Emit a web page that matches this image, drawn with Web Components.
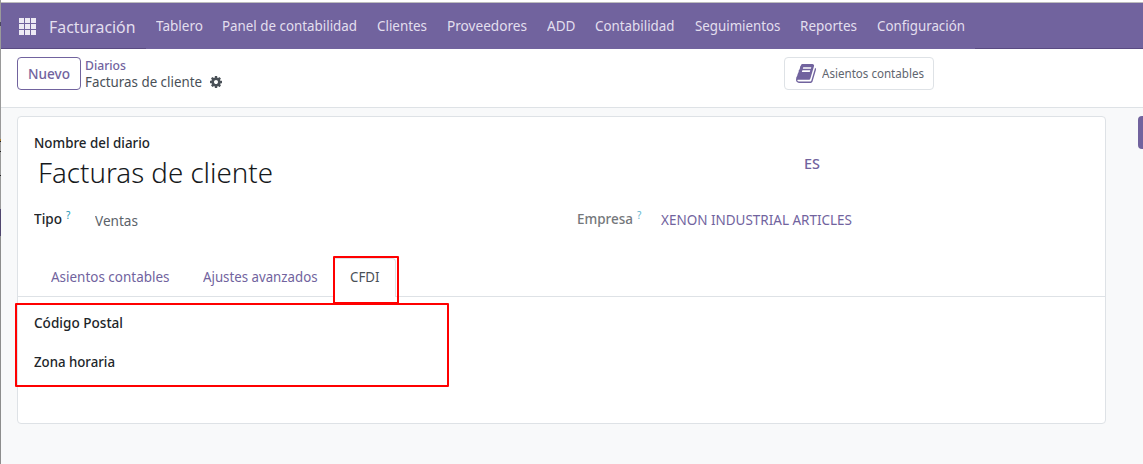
<!DOCTYPE html>
<html lang="es">
<head>
<meta charset="utf-8">
<title>Facturas de cliente</title>
<style>
body{margin:0;background:#f8f9fa;overflow:hidden;font:400 14px/20px "Noto Sans","Open Sans",sans-serif}
</style>
</head>
<body>
<journal-app></journal-app>
<script>
const define = (name, html, setup) => {
  const t = document.createElement('template');
  t.innerHTML = html;
  customElements.define(name, class extends HTMLElement {
    connectedCallback() {
      if (this.shadowRoot) return;
      this.attachShadow({mode: 'open'}).append(t.content.cloneNode(true));
      if (setup) setup(this, this.shadowRoot);
    }
  });
};

// A single line of text, condensed or widened to the width in its "w" attribute.
define('fit-text', `<style>
:host{display:block;flex:none;white-space:nowrap;height:20px;line-height:20px}
span{display:inline-block;transform-origin:0 0}
</style><span><slot></slot></span>`, (el, root) => {
  const s = root.querySelector('span'), w = +el.getAttribute('w');
  el.style.width = w + 'px';
  s.style.transform = `scaleX(${w / s.getBoundingClientRect().width})`;
});

define('apps-icon', `<style>:host{display:block;width:17px;height:17px}svg{display:block}</style>
<svg width="17" height="17" fill="#edeaf4"><path d="M0 0h5v5H0zM6 0h5v5H6zM12 0h5v5h-5zM0 6h5v5H0zM6 6h5v5H6zM12 6h5v5h-5zM0 12h5v5H0zM6 12h5v5H6zM12 12h5v5h-5z"/></svg>`);

define('gear-icon', `<style>:host{display:block;width:12px;height:12px}svg{display:block}</style>
<svg width="12" height="12" viewBox="0 0 1536 1536" fill="#495057"><path d="M1024 768q0-106-75-181t-181-75-181 75-75 181 75 181 181 75 181-75 75-181zm512-109v222q0 12-8 23t-20 13l-185 28q-19 54-39 91 35 50 107 138 10 12 10 25t-9 23q-27 37-99 108t-94 71q-12 0-26-9l-138-108q-44 23-91 38-16 136-29 186-7 28-36 28H657q-14 0-24.500-8.500T621 1506l-28-184q-49-16-90-37l-141 107q-10 9-25 9-14 0-25-11-126-114-165-168-7-10-7-23 0-12 8-23 15-21 51-66.500t54-70.500q-27-50-41-99L29 913q-13-2-21-12.500T0 877V655q0-12 8-23t19-13l186-28q14-46 39-92-40-57-107-138-10-12-10-24 0-10 9-23 26-36 98.500-107.500T337 135q13 0 26 10l138 107q44-23 91-38 16-136 29-186 7-28 36-28h222q14 0 24.500 8.500T915 30l28 184q49 16 90 37l142-107q9-9 24-9 13 0 25 10 129 119 165 170 7 8 7 22 0 12-8 23-15 21-51 66.500t-54 70.500q26 50 41 98l183 28q13 2 21 12.500t8 23.500z"/></svg>`);

define('book-icon', `<style>:host{display:block;width:20px;height:19px}svg{display:block}</style>
<svg width="20" height="19" viewBox="0 0 1664 1536" preserveAspectRatio="none" fill="#71639e"><path d="M1639 350q40 57 18 129l-275 906q-19 64-76.500 107.500T1183 1536H260q-77 0-148.500-53.500T12 1351q-24-67-2-127 0-4 3-27t4-37q1-8-3-21.500t-3-19.500q2-11 8-21t16.500-23.500T52 1051q23-38 45-91.500t30-91.500q3-10 .5-30t-.5-28q3-11 17-28t17-23q21-36 42-92t25-90q1-9-2.500-32t.5-28q4-13 22-30.500t22-22.500q19-26 42.500-84.500T340 283q1-8-3-25.500t-2-26.500q2-8 9-18t18-23 17-21q8-12 16.500-30.500t15-35 16-36 19.500-32T469.500 12t36-11.500T553 6l-1 3q38-9 51-9h761q74 0 114 56t18 130l-274 906q-36 119-71.500 153.500T1022 1280H153q-27 0-38 15-11 16-1 43 24 70 144 70h923q29 0 56-15.500t35-41.500l300-987q7-22 5-57 38 15 59 43zm-1064 2q-4 13 2 22.500t20 9.500h608q13 0 25.500-9.500T1247 352l21-64q4-13-2-22.500t-20-9.500H638q-13 0-25.500 9.500T596 288zm-83 256q-4 13 2 22.500t20 9.500h608q13 0 25.500-9.500T1164 608l21-64q4-13-2-22.500t-20-9.500H555q-13 0-25.500 9.500T513 544z"/></svg>`);

define('nav-bar', `<style>
:host{display:flex;box-sizing:border-box;height:47px;padding:0 0 0 19px;border-top:1px solid #bdbdbd;background:linear-gradient(90deg,#5a4b83 146px,transparent 146px 975px,#5a4b83 975px) bottom/100% 1px no-repeat #71639e;color:#e3dfee}
apps-icon{margin-top:15px}
.brand{font-size:17px;margin:14px 20.500px 0 12.500px}
nav{display:flex;gap:19.900px;margin-top:13px}
</style><apps-icon></apps-icon><fit-text class="brand" w="86.500">Facturación</fit-text>
<nav><fit-text w="47">Tablero</fit-text><fit-text w="135">Panel de contabilidad</fit-text><fit-text w="50">Clientes</fit-text><fit-text w="80">Proveedores</fit-text><fit-text w="28.500">ADD</fit-text><fit-text w="79.500">Contabilidad</fit-text><fit-text w="85.500">Seguimientos</fit-text><fit-text w="57">Reportes</fit-text><fit-text w="88">Configuración</fit-text></nav>`);

define('control-panel', `<style>
:host{display:flex;box-sizing:border-box;height:59px;padding:8px 0 0 17px;background:#fff;border-bottom:1px solid #dee2e6}
button{font:inherit;display:flex;align-items:center;box-sizing:border-box;height:33px;background:#fff;border-radius:4px;margin:0}
.new{width:64px;padding:0 0 0 10px;border:1px solid #71639e;color:#71639e;font-weight:500}
.crumbs{width:699px;margin:-2px 0 0 4px}
.up{color:#71639e;font-weight:500;font-size:13px;height:17px}
.here{display:flex;gap:8px;color:#495057}
gear-icon{margin-top:4px}
.stat{width:150px;padding:0 0 0 11px;gap:6px;border:1px solid #dee2e6;color:#5f6670;font-size:12px}
</style><button class="new"><fit-text w="42">Nuevo</fit-text></button>
<div class="crumbs"><fit-text class="up" w="41">Diarios</fit-text><div class="here"><fit-text w="117">Facturas de cliente</fit-text><gear-icon></gear-icon></div></div>
<button class="stat"><book-icon></book-icon><fit-text w="102">Asientos contables</fit-text></button>`);

define('form-label', `<style>
:host{display:flex;gap:4px;color:#212529;font-weight:500}
:host([muted]){color:#74777b}
i{font:10px/12px "Noto Sans",sans-serif;color:#1592b4}
:host([muted]) i{color:#5fb4d0}
</style>`, (el, root) => {
  const f = document.createElement('fit-text');
  f.setAttribute('w', el.getAttribute('w'));
  f.textContent = el.getAttribute('text');
  root.append(f);
  if (el.hasAttribute('help')) {
    const i = document.createElement('i');
    i.textContent = '?';
    root.append(i);
  }
});

define('note-book', `<style>
:host{display:block;margin-top:26px}
.tabs{display:flex;height:39px;padding-left:16px;border-bottom:1px solid #dee2e6;color:#71639e}
.tab{padding:10px 16px 0 17px}
.active{box-sizing:border-box;height:39px;width:63px;margin-top:1px;padding:8px 0 0 16px;border:1px solid #dee2e6;border-bottom:0;border-radius:4px 4px 0 0;background:#fff;color:#495057}
.page{display:grid;gap:19px;padding:16px 0 0 16px}
</style><div class="tabs"><div class="tab"><fit-text w="118.500">Asientos contables</fit-text></div><div class="tab"><fit-text w="114.500">Ajustes avanzados</fit-text></div><div class="tab active"><fit-text w="29.500">CFDI</fit-text></div></div>
<div class="page"><form-label w="89" text="Código Postal"></form-label><form-label w="81" text="Zona horaria"></form-label></div>`);

define('form-sheet', `<style>
:host{display:block;box-sizing:border-box;width:1089px;height:308px;padding-top:16px;background:#fff;border:1px solid #dee2e6;border-radius:4px}
.title{display:flex;padding-left:20px}
h1{margin:4px 531px 0 0;font-weight:300;font-size:27px;color:#16191c}
h1 fit-text{height:32px;line-height:32px}
.lang{margin-top:1px;color:#71639e;font-weight:500}
.row{display:grid;grid-template-columns:61px 482px 84px 1fr;margin-top:20px}
.row>*{margin-left:16px}
.first{margin-left:16px}
.row .type{margin-top:2px;color:#5b6269}
.row .co{margin-top:1px;color:#71639e}
</style><form-label class="first" w="116" text="Nombre del diario"></form-label>
<div class="title"><h1><fit-text w="235">Facturas de cliente</fit-text></h1><fit-text class="lang" w="16">ES</fit-text></div>
<div class="row"><form-label w="28" text="Tipo" help></form-label><fit-text class="type" w="43">Ventas</fit-text><form-label muted w="56" text="Empresa" help></form-label><fit-text class="co" w="191">XENON INDUSTRIAL ARTICLES</fit-text></div>
<note-book></note-book>`);

define('red-frame', `<style>:host{display:block;position:absolute;box-sizing:border-box;border:2px solid #f00;border-radius:1px}</style>`);

define('journal-app', `<style>
:host{display:block;position:relative;box-sizing:border-box;width:1143px;height:464px;padding-top:2px;overflow:hidden;background:#fff}
main{display:flex;justify-content:space-between;padding:8px 0 0 17px;height:348px;background:#f8f9fa}
.side{width:5px;height:33px;border-radius:4px 0 0 4px;background:#71639e}
.edge{position:absolute;left:0;top:0;width:1px;height:464px;background:linear-gradient(#9a9a9a 22px,#4b4860 22px 26px,#9a9a9a 26px 139px,#b08030 139px 141px,#222 141px 142px,#999 142px 151px,#222 151px 152px,#999 152px 175px,#222 175px 176px,#999 176px 209px,#50466f 209px 236px,#8d8d8d 236px)}
.tab-frame{left:333px;top:256px;width:66px;height:48px}
.page-frame{left:15px;top:303px;width:434px;height:84px}
</style><nav-bar></nav-bar><control-panel></control-panel>
<main><form-sheet></form-sheet><div class="side"></div></main>
<div class="edge"></div><red-frame class="tab-frame"></red-frame><red-frame class="page-frame"></red-frame>`);
</script>
</body>
</html>
